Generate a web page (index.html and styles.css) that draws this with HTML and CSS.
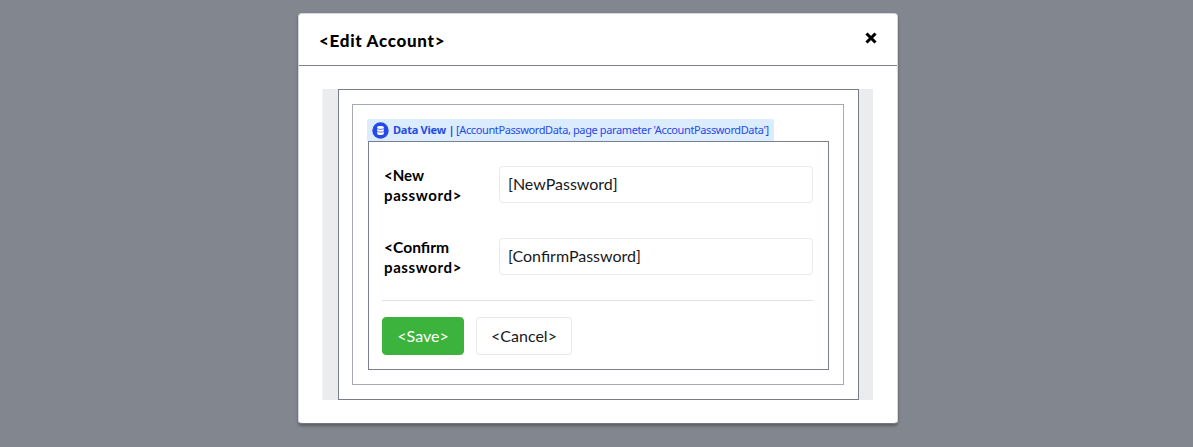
FILE: index.html
```html
<!DOCTYPE html>
<html lang="en">
<head>
<meta charset="utf-8">
<title>Edit Account</title>
<link rel="stylesheet" href="styles.css">
</head>
<body>
<main class="modal">
  <header class="modal-header">
    <h1 class="title">&lt;Edit Account&gt;</h1>
    <button class="close" aria-label="Close"><svg width="12" height="12" viewBox="0 0 12 12"><path d="M1.5 1.5l9 9M10.5 1.5l-9 9" stroke="#000" stroke-width="3.1"/></svg></button>
  </header>
  <div class="grid-area">
    <div class="column">
      <div class="container">
        <div class="view-label">
          <svg class="view-icon" width="17" height="17" viewBox="0 0 17 17"><circle cx="8.5" cy="8.5" r="8.2" fill="#264ae5"/><path d="M5.2 5.4v6.2c0 2 6.6 2 6.6 0V5.4z" fill="#fff"/><ellipse cx="8.5" cy="5.4" rx="3.3" ry="1.4" fill="#fff"/><path d="M5.2 6.5c1 1.2 5.6 1.2 6.6 0M5.2 9.2c1 1.2 5.6 1.2 6.6 0" fill="none" stroke="#264ae5" stroke-width=".8"/></svg>
          <b class="view-name">Data View |</b>
          <span class="view-source">[AccountPasswordData, page parameter 'AccountPasswordData']</span>
        </div>
        <form class="data-view">
          <div class="field">
            <label class="label"><span>&lt;New</span><br><span class="wide">password&gt;</span></label>
            <div class="input">[NewPassword]</div>
          </div>
          <div class="field">
            <label class="label"><span class="confirm">&lt;Confirm</span><br><span class="wide">password&gt;</span></label>
            <div class="input">[ConfirmPassword]</div>
          </div>
          <div class="actions">
            <button type="button" class="btn save">&lt;Save&gt;</button>
            <button type="button" class="btn cancel">&lt;Cancel&gt;</button>
          </div>
        </form>
      </div>
    </div>
  </div>
</main>
</body>
</html>
```
FILE: styles.css
```css
* { box-sizing: border-box; }
body { margin: 0; height: 447px; padding: 13px 0 0 298px; overflow: hidden; background: #82868f; font-family: Lato, sans-serif; color: #000; }
.modal { width: 600px; height: 411px; background: #fff; border: 1px solid #d3d5d8; border-bottom-color: #737781; border-radius: 4px; box-shadow: 0 2px 3px rgba(0,0,0,.3); }
.modal-header { height: 52px; padding: 0 20px; display: flex; justify-content: space-between; border-bottom: 1px solid #7d818b; }
.title { margin: 0; font-size: 17px; line-height: 53px; font-weight: 900; letter-spacing: .7px; }
.close { width: 12px; height: 12px; margin-top: 18px; padding: 0; border: 0; background: none; }
.close svg { display: block; }
.grid-area { margin: 23px 24px 0 23px; width: 551px; height: 311px; padding: 0 14px 0 15px; background: #ebecee; border-left: 1px solid #f5f5f6; }
.column { width: 521px; height: 311px; padding: 14px 0 0 13px; background: #fff; border: 1px solid #777c86; }
.container { width: 492px; height: 281px; padding: 14px; border: 1px solid #a7aab2; }
.view-label { width: 407px; height: 22px; display: flex; align-items: center; padding-left: 5px; background: #dbecff; color: #264ae5; font: 11px/20px "Noto Sans", sans-serif; border-radius: 2px 2px 0 0; white-space: nowrap; }
.view-icon { flex: none; }
.view-name { flex: none; width: 59px; margin-left: 4px; font-weight: 700; letter-spacing: -.25px; }
.view-source { margin-left: 4px; letter-spacing: -.38px; }
.data-view { width: 461px; height: 229px; margin-left: 1px; padding: 24px 15px 0 14px; border: 1px solid #7b7f8a; }
.field { display: flex; height: 72px; }
.label { width: 116px; margin-top: -1px; padding-left: 1px; font-size: 15px; line-height: 20px; font-weight: 700; }
.wide { letter-spacing: .62px; }
.confirm { font-size: 15.6px; line-height: 19px; }
.input { width: 314px; height: 37px; padding-left: 8px; border: 1px solid #e9eaec; border-radius: 4px; font-size: 16px; line-height: 34px; color: #17191c; }
.actions { margin: -10px 0 0 -1px; padding-top: 16px; display: flex; gap: 12px; border-top: 1px solid #e0e1e3; }
.btn { height: 38px; padding: 0 0 2px; border: 1px solid #e7e8ea; border-radius: 4px; background: #fff; color: #17191c; font: 16px Lato, sans-serif; text-align: center; }
.save { width: 82px; background: #3cb33d; border-color: #3cb33d; color: #fff; }
.cancel { width: 96px; }
```
